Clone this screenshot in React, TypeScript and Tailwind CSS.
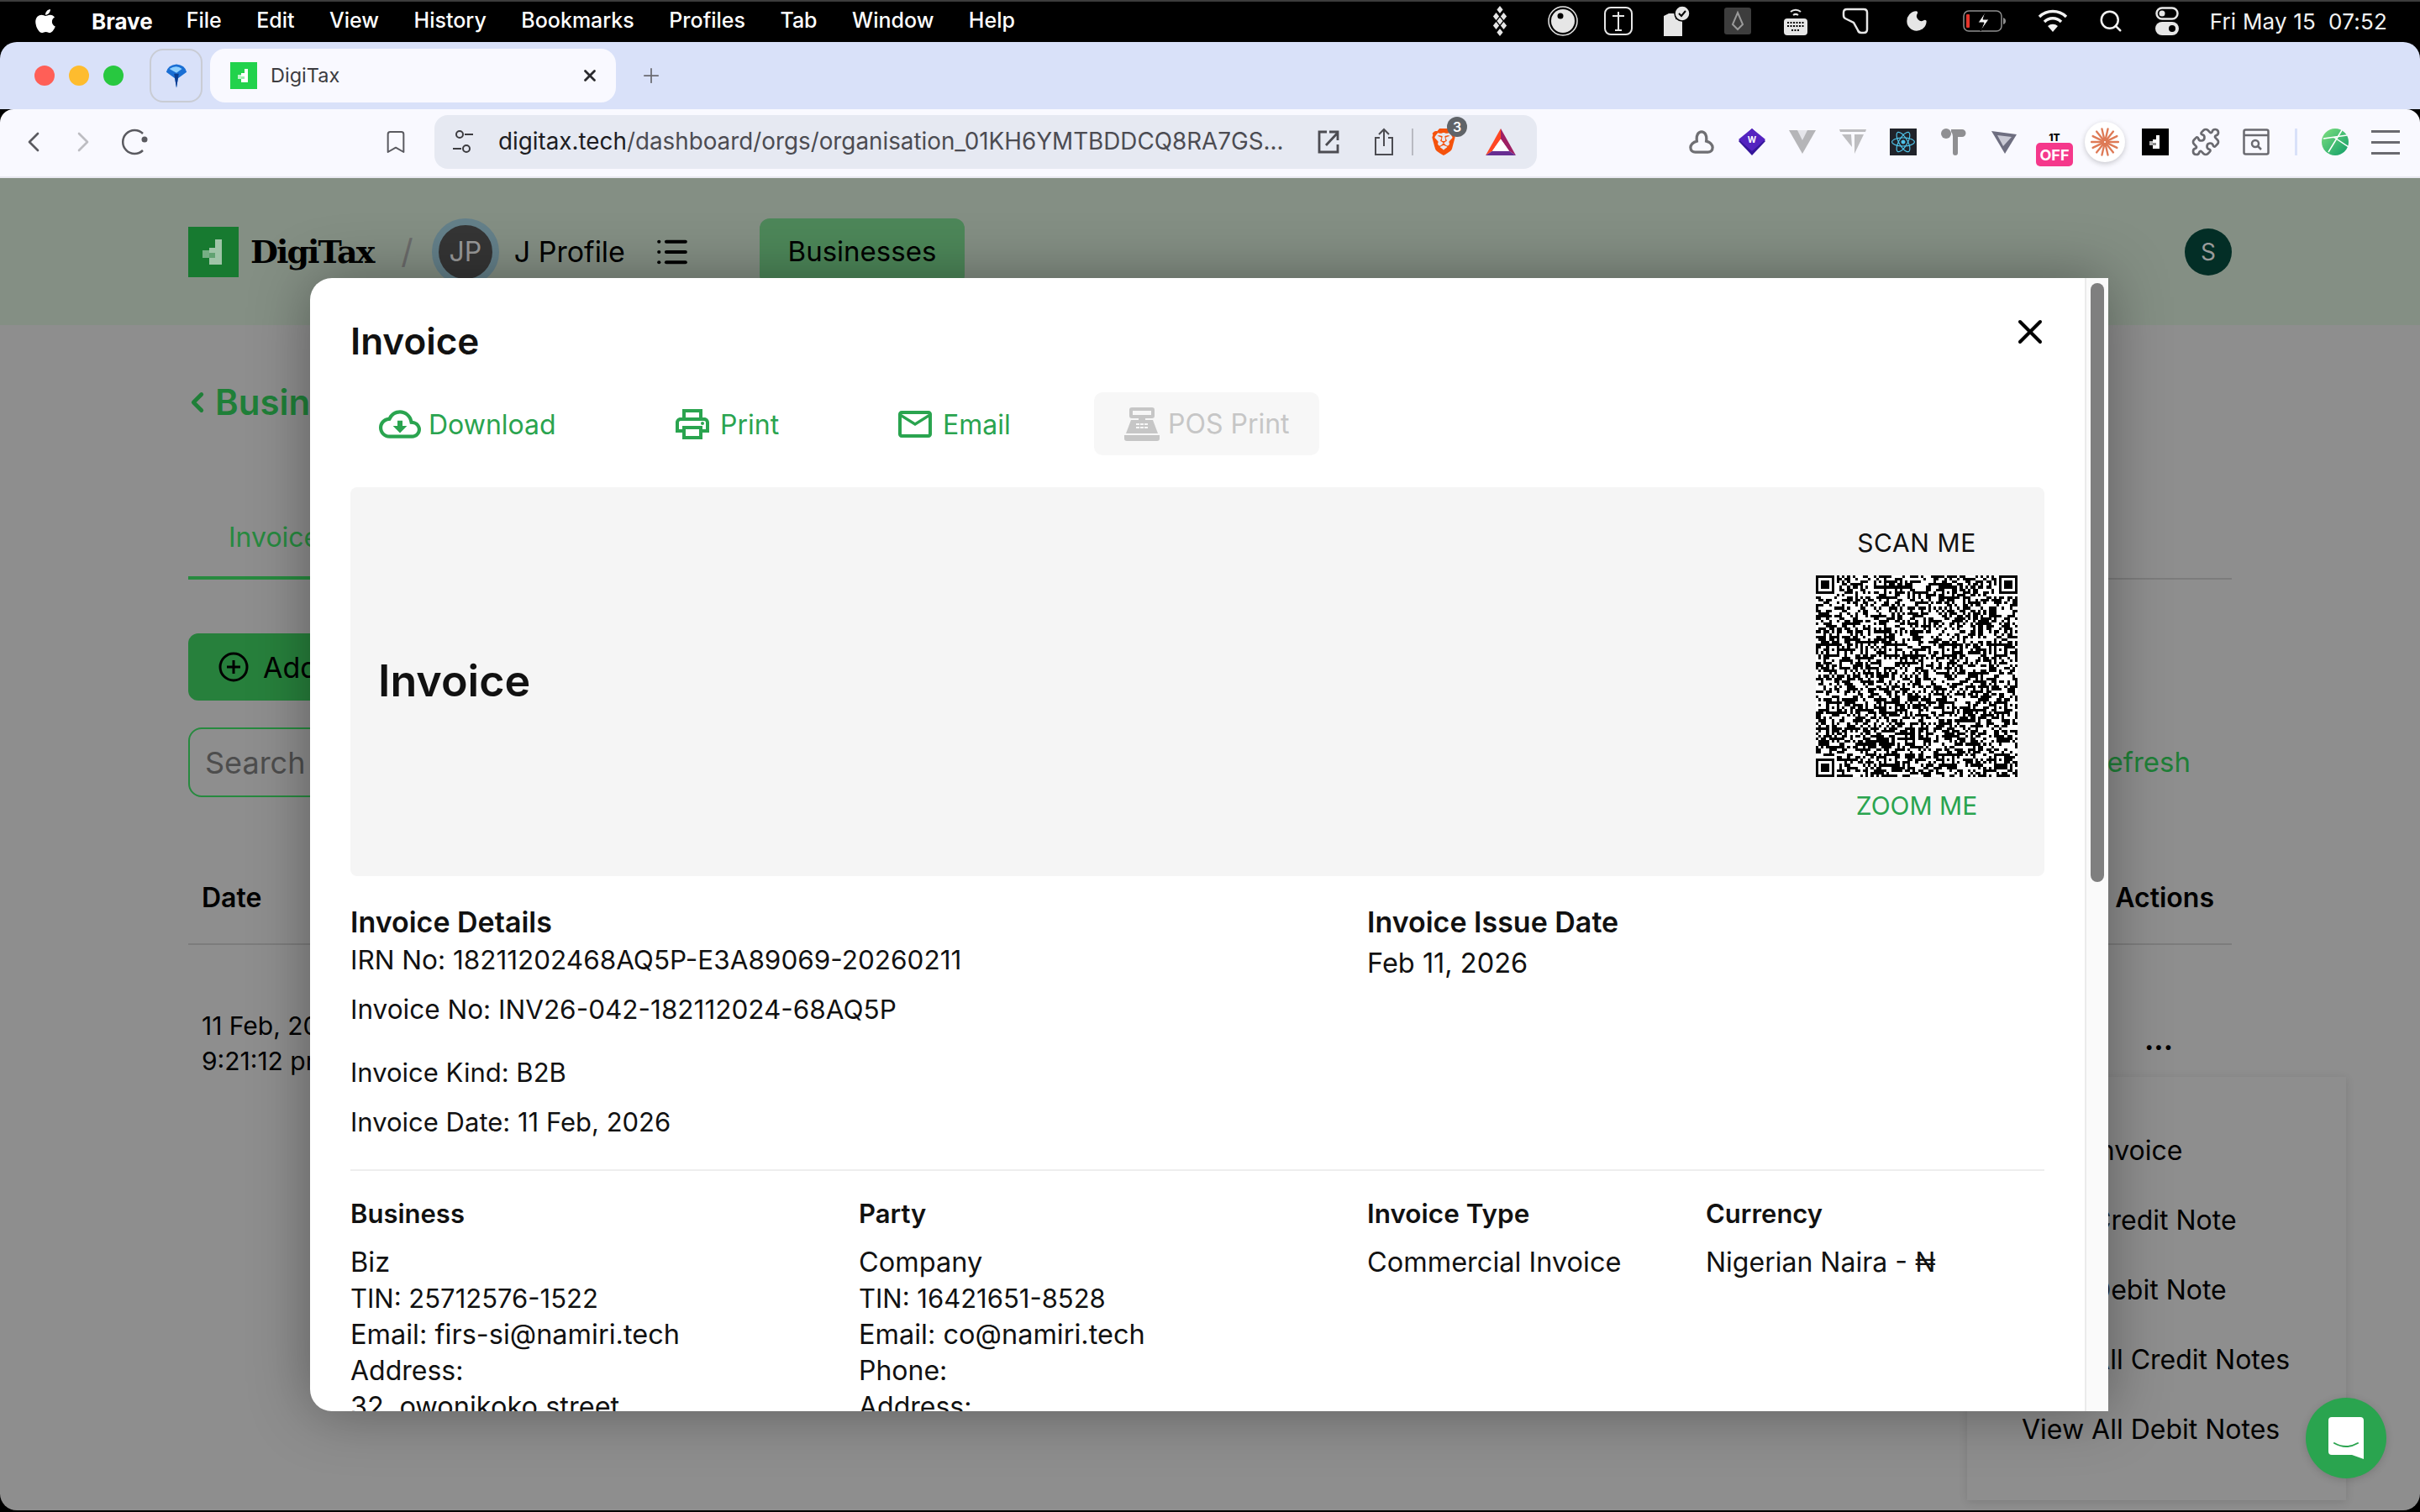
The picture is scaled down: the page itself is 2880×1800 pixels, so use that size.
import React from 'react';
import { FaApple, FaReact } from 'react-icons/fa';
import { SiBrave } from 'react-icons/si';
import { MdOutlineCloudDownload, MdOutlineLocalPrintshop, MdMailOutline } from 'react-icons/md';
import { ChevronLeft, ChevronRight, Bookmark, Puzzle, Plus, X, List, Search, Moon } from 'lucide-react';

const menuItems = ['File', 'Edit', 'View', 'History', 'Bookmarks', 'Profiles', 'Tab', 'Window', 'Help'];
const dropdownItems = ['View Invoice', 'View Credit Note', 'View Debit Note', 'View All Credit Notes', 'View All Debit Notes'];

// Pixel "d" mark of the DigiTax logo
const LogoMark = ({ bg, fg, className }: { bg: string; fg: string; className: string }) => (
  <svg viewBox="0 0 60 60" className={className} shapeRendering="crispEdges">
    <rect width="60" height="60" fill={bg} />
    <rect x="32" y="15" width="8" height="10" fill={fg} />
    <rect x="25" y="25" width="15" height="20" fill={fg} />
    <rect x="25" y="31" width="7" height="6" fill={bg} opacity="0.45" />
    <rect x="17" y="28" width="8" height="9" fill={fg} opacity="0.7" />
  </svg>
);

// Seeded fake QR code so every render gives the same picture
const buildQrPath = () => {
  const size = 77;
  let seed = 2468;
  const rand = () => {
    seed = (seed + 0x6d2b79f5) | 0;
    let t = Math.imul(seed ^ (seed >>> 15), 1 | seed);
    t = (t + Math.imul(t ^ (t >>> 7), 61 | t)) ^ t;
    return ((t ^ (t >>> 14)) >>> 0) / 4294967296;
  };
  const grid: boolean[][] = [];
  for (let y = 0; y < size; y++) {
    grid.push([]);
    for (let x = 0; x < size; x++) grid[y].push(rand() > 0.5);
  }
  const square = (ox: number, oy: number, n: number, ring: (d: number) => boolean, quiet = 0) => {
    for (let y = -quiet; y < n + quiet; y++) {
      for (let x = -quiet; x < n + quiet; x++) {
        const gx = ox + x;
        const gy = oy + y;
        if (gx < 0 || gy < 0 || gx >= size || gy >= size) continue;
        const inside = x >= 0 && y >= 0 && x < n && y < n;
        const d = Math.min(x, y, n - 1 - x, n - 1 - y);
        grid[gy][gx] = inside ? ring(d) : false;
      }
    }
  };
  const centers = [6, 28, 50, 70];
  centers.forEach(cy =>
    centers.forEach(cx => {
      if ((cx < 10 && cy < 10) || (cx > 66 && cy < 10) || (cx < 10 && cy > 66)) return;
      square(cx - 2, cy - 2, 5, d => d !== 1);
    })
  );
  const finder = (d: number) => d !== 1;
  square(0, 0, 7, finder, 1);
  square(size - 7, 0, 7, finder, 1);
  square(0, size - 7, 7, finder, 1);
  let path = '';
  grid.forEach((row, y) =>
    row.forEach((on, x) => {
      if (on) path += `M${x} ${y}h1v1h-1z`;
    })
  );
  return path;
};
const qrPath = buildQrPath();

const MenuBarIcons = () => (
  <div className="ml-auto flex items-center pr-[39px]">
    <svg viewBox="0 0 20 40" className="h-[36px] w-[20px]" fill="#e6e6e6">
      <path d="M10 0l4 5-4 5-4-5zM5 9l4 5-4 5-4-5zM15 9l4 5-4 5-4-5zM10 15l4 5-4 5-4-5zM5 21l4 5-4 5-4-5zM15 21l4 5-4 5-4-5zM10 30l4 5-4 5-4-5z" />
    </svg>
    <svg viewBox="0 0 36 36" className="ml-[47px] h-[36px] w-[36px]">
      <circle cx="18" cy="18" r="17" fill="none" stroke="#e6e6e6" strokeWidth="1.5" />
      <circle cx="18" cy="18" r="14" fill="#e6e6e6" />
      <circle cx="15" cy="12" r="3.5" fill="#000" />
    </svg>
    <svg viewBox="0 0 36 36" className="ml-[30px] h-[36px] w-[36px]" fill="none" stroke="#e6e6e6" strokeWidth="2">
      <rect x="2" y="2" width="32" height="32" rx="7" />
      <path d="M11 12h14M18 7v22M14 29h8" />
    </svg>
    <svg viewBox="0 0 34 36" className="ml-[34px] h-[38px] w-[34px]">
      <path d="M2 12l6-3h8v7h8v20H2z" fill="#e6e6e6" />
      <circle cx="24" cy="9" r="9" fill="#e6e6e6" stroke="#000" strokeWidth="1.5" />
      <path d="M20 9l3 3 5-6" fill="none" stroke="#000" strokeWidth="2" />
    </svg>
    <svg viewBox="0 0 32 32" className="ml-[40px] h-[32px] w-[32px]">
      <rect width="32" height="32" rx="3" fill="#3d3d3d" />
      <path d="M16 6l6 14-6 6-6-6z" fill="none" stroke="#9a9a9a" strokeWidth="2" />
    </svg>
    <svg viewBox="0 0 30 36" className="ml-[38px] h-[36px] w-[30px]">
      <path d="M9 7a9 9 0 0 1 12 0M12 11a5 5 0 0 1 6 0" fill="none" stroke="#e6e6e6" strokeWidth="2" />
      <rect x="1" y="15" width="28" height="20" rx="4" fill="#e6e6e6" />
      <path d="M5 20h20M5 24h20M10 29h10" stroke="#000" strokeWidth="2" strokeDasharray="2 1.5" />
    </svg>
    <svg viewBox="0 0 32 32" className="ml-[40px] h-[32px] w-[32px]">
      <path d="M2 6q0-4 4-4h20q4 0 4 4v20q0 4-4 4h-3q-3 0-4-3l-5-9L4 13q-2-1-2-4z" fill="none" stroke="#e6e6e6" strokeWidth="2.5" />
    </svg>
    <Moon className="ml-[43px] h-[36px] w-[28px]" fill="#e6e6e6" stroke="#e6e6e6" />
    <svg viewBox="0 0 52 26" className="ml-[41px] h-[26px] w-[52px]">
      <rect x="1" y="1" width="45" height="24" rx="6" fill="none" stroke="#8e8e8e" strokeWidth="1.5" />
      <rect x="4" y="5" width="4" height="16" rx="1" fill="#e5342b" />
      <path d="M48 9q3 1 3 4t-3 4z" fill="#8e8e8e" />
      <path d="M27 2l-9 13h7l-4 10 10-14h-7z" fill="#f2f2f2" stroke="#000" strokeWidth="1" />
    </svg>
    <svg viewBox="0 0 36 30" className="ml-[37px] h-[30px] w-[36px]" fill="none" stroke="#f2f2f2" strokeWidth="3.5">
      <path d="M2 10a23 23 0 0 1 32 0M8 16a14 14 0 0 1 20 0" />
      <path d="M18 28l-6-7a9 9 0 0 1 12 0z" fill="#f2f2f2" stroke="none" />
    </svg>
    <Search className="ml-[36px] h-[32px] w-[30px]" stroke="#f2f2f2" strokeWidth={2} />
    <svg viewBox="0 0 28 34" className="ml-[38px] h-[34px] w-[28px]">
      <rect x="1.5" y="1.5" width="25" height="13" rx="6.5" fill="none" stroke="#e6e6e6" strokeWidth="2.5" />
      <circle cx="8" cy="8" r="3.5" fill="#e6e6e6" />
      <rect x="0" y="18" width="28" height="16" rx="8" fill="#e6e6e6" />
      <circle cx="20" cy="26" r="4" fill="#000" />
    </svg>
    <span className="ml-[37px] text-[26px] tracking-[0.2px] text-[#f2f2f2]">Fri May 15&nbsp; 07:52</span>
  </div>
);

const ExtensionCell = ({ children }: { children: React.ReactNode }) => (
  <div className="flex h-[60px] w-[60px] items-center justify-center">{children}</div>
);

const ExtensionIcons = () => (
  <div className="ml-auto flex items-center pr-[11px]">
    <ExtensionCell>
      <svg viewBox="0 0 32 32" className="h-[30px] w-[32px]" fill="none" stroke="#6f6f73" strokeWidth="3.5">
        <path d="M10 15c-1-8 2-12 6-12s7 4 6 12c5 1 8 5 8 8 0 4-3 6-6 6H8c-3 0-6-2-6-6 0-3 3-7 8-8z" />
      </svg>
    </ExtensionCell>
    <ExtensionCell>
      <div className="relative flex h-[32px] w-[32px] items-center justify-center">
        <svg viewBox="0 0 32 32" className="absolute inset-0 h-full w-full">
          <path d="M16 0l16 15-16 17L0 15z" fill="#35169a" />
          <path d="M16 0l16 13-16 14L0 13z" fill="#5423c0" />
        </svg>
        <span className="relative -mt-[5px] text-[10px] font-bold text-white">W</span>
      </div>
    </ExtensionCell>
    <ExtensionCell>
      <svg viewBox="0 0 32 28" className="h-[28px] w-[32px]">
        <path d="M0 0h32L16 28z" fill="#b5b5b8" />
        <path d="M10 0h12l-6 12z" fill="#f9f9ff" opacity="0.7" />
      </svg>
    </ExtensionCell>
    <ExtensionCell>
      <svg viewBox="0 0 32 30" className="h-[30px] w-[32px]" fill="#bdbdc0">
        <path d="M0 0h32l-1 3H1zM3 6h11l1 15zM18 6h11L18 29z" />
      </svg>
    </ExtensionCell>
    <ExtensionCell>
      <div className="flex h-[32px] w-[32px] items-center justify-center bg-[#20232a]">
        <FaReact className="h-[28px] w-[28px] text-[#4fc3e8]" />
      </div>
    </ExtensionCell>
    <ExtensionCell>
      <svg viewBox="0 0 32 32" className="h-[32px] w-[32px]" fill="#8f8f92">
        <circle cx="7" cy="6" r="6" />
        <path d="M13 1h13a4.5 4.5 0 0 1 0 9h-5v19q0 3-3 3t-3-3V9q0-3-2-5z" />
      </svg>
    </ExtensionCell>
    <ExtensionCell>
      <svg viewBox="0 0 30 28" className="h-[28px] w-[30px]">
        <path d="M0 1l30 4-14 23z" fill="#6e6e80" />
        <path d="M7 6l17 2-10 11z" fill="#c9c9d4" />
      </svg>
    </ExtensionCell>
    <ExtensionCell>
      <div className="mt-[18px] flex h-[40px] w-[44px] flex-col items-center">
        <span className="h-[11px] text-[12px] leading-[11px] font-extrabold text-black">1T</span>
        <span className="mt-[1px] flex h-[28px] w-[44px] items-center justify-center rounded-[5px] bg-[#f5388b] text-[18px] font-bold text-white">OFF</span>
      </div>
    </ExtensionCell>
    <ExtensionCell>
      <div className="flex h-[48px] w-[48px] items-center justify-center rounded-full bg-white shadow-[0_2px_6px_rgba(0,0,0,0.2)]">
        <svg viewBox="-16 -16 32 32" className="h-[34px] w-[34px]" stroke="#de7a56" strokeWidth="2.2" strokeLinecap="round">
          {[...Array(14)].map((_, i) => {
            const a = (i / 14) * Math.PI * 2;
            return <line key={i} x1={Math.cos(a) * 2} y1={Math.sin(a) * 2} x2={Math.cos(a) * 15} y2={Math.sin(a) * 15} />;
          })}
        </svg>
      </div>
    </ExtensionCell>
    <ExtensionCell>
      <LogoMark bg="#000" fg="#fff" className="h-[32px] w-[32px]" />
    </ExtensionCell>
    <ExtensionCell>
      <Puzzle className="h-[36px] w-[36px]" stroke="#6a6a70" strokeWidth={1.8} />
    </ExtensionCell>
    <ExtensionCell>
      <svg viewBox="0 0 32 32" className="h-[32px] w-[34px]" fill="none" stroke="#6a6a70" strokeWidth="2.5">
        <rect x="1.5" y="1.5" width="29" height="29" rx="2" />
        <path d="M1.5 8h29" />
        <circle cx="15" cy="18" r="4" />
        <path d="M18 21l4 4" />
      </svg>
    </ExtensionCell>
    <div className="flex h-[32px] w-[34px] items-center justify-center">
      <div className="h-full w-[3px] bg-[#d9e1f9]" />
    </div>
    <ExtensionCell>
      <svg viewBox="0 0 32 32" className="h-[32px] w-[32px]">
        <defs>
          <linearGradient id="ball" x1="0" y1="0" x2="1" y2="1">
            <stop offset="0" stopColor="#7fe07f" />
            <stop offset="1" stopColor="#0f9d68" />
          </linearGradient>
        </defs>
        <circle cx="16" cy="16" r="16" fill="url(#ball)" />
        <path d="M2 12L30 8M8 28L24 2M14 10L32 22" stroke="#fff" strokeWidth="1.5" fill="none" />
      </svg>
    </ExtensionCell>
    <ExtensionCell>
      <div className="flex w-[34px] flex-col gap-[10px]">
        <div className="h-[3px] bg-[#6a6a70]" />
        <div className="h-[3px] bg-[#6a6a70]" />
        <div className="h-[3px] bg-[#6a6a70]" />
      </div>
    </ExtensionCell>
  </div>
);

const BrowserChrome = () => (
  <div className="shrink-0">
    {/* macOS menu bar */}
    <div className="flex h-[50px] items-center border-t-2 border-[#3c3c3c] bg-black pb-[2px] pl-[41px] text-[25px] text-white">
      <FaApple className="h-[32px] w-[26px]" />
      <span className="ml-[42px] text-[26px] font-bold">Brave</span>
      <div className="ml-[40px] flex gap-[41.5px] font-medium">
        {menuItems.map(item => (
          <span key={item}>{item}</span>
        ))}
      </div>
      <MenuBarIcons />
    </div>

    {/* Tab strip */}
    <div className="flex h-[80px] items-center rounded-t-[20px] bg-[#d9e1f9] pl-[41px]">
      <div className="flex gap-[17px]">
        <div className="h-[24px] w-[24px] rounded-full bg-[#ff5f57]" />
        <div className="h-[24px] w-[24px] rounded-full bg-[#febc2e]" />
        <div className="h-[24px] w-[24px] rounded-full bg-[#28c840]" />
      </div>
      <div className="ml-[31px] flex h-[64px] w-[63px] items-center justify-center rounded-[16px] border-2 border-[#c9ccd4]">
        <svg viewBox="0 0 30 30" className="h-[29px] w-[28px]">
          <path d="M15 30L13 18 2 10Q4 1 15 0q11 1 13 10L17 18z" fill="#1a6fd4" />
          <path d="M15 30L12 12h6z" fill="#0a3d91" />
          <path d="M6 6q9-6 16 0l-7 5z" fill="#8fd0ff" />
        </svg>
      </div>
      <div className="ml-[9px] flex h-[64px] w-[483px] items-center rounded-[18px] bg-[#f9f9ff] pl-[24px]">
        <LogoMark bg="#22d24c" fg="#fff" className="h-[32px] w-[32px]" />
        <span className="ml-[16px] text-[23.5px] text-[#3c3c40]">DigiTax</span>
        <X className="ml-auto mr-[20px] h-[22px] w-[22px]" stroke="#2a2a2e" strokeWidth={3} />
      </div>
      <Plus className="ml-[28px] h-[28px] w-[28px]" stroke="#6a6a70" strokeWidth={1.5} />
    </div>

    {/* Toolbar */}
    <div className="flex h-[80px] items-center rounded-t-[16px] bg-[#f9f9ff] pb-[2px]">
      <ChevronLeft className="ml-[20px] h-[44px] w-[40px]" stroke="#5a5a60" strokeWidth={1.6} />
      <ChevronRight className="ml-[19px] h-[44px] w-[40px]" stroke="#bdbdc2" strokeWidth={1.6} />
      <svg viewBox="0 0 34 34" className="ml-[25px] h-[34px] w-[34px]" fill="none" stroke="#5a5a60" strokeWidth="2.5">
        <path d="M26 27a14 14 0 1 1 0-20" />
        <circle cx="28" cy="14" r="3.5" fill="#5a5a60" stroke="none" />
      </svg>
      <Bookmark className="ml-[277px] h-[42px] w-[32px]" stroke="#5a5a60" strokeWidth={1.5} />
      <div className="ml-[30px] flex h-[64px] w-[1312px] items-center rounded-[16px] bg-[#e6e9f2] pl-[22px]">
        <svg viewBox="0 0 24 32" className="h-[34px] w-[24px]" fill="none" stroke="#3c3c40" strokeWidth="2">
          <circle cx="8" cy="7" r="4" />
          <path d="M14 7h10M0 24h10" />
          <circle cx="16" cy="24" r="4" />
        </svg>
        <div className="ml-[30px] w-[941px] whitespace-nowrap text-[27.8px] text-[#4c4c52]">
          <span className="text-[#1d1d22]">digitax.tech</span>/dashboard/orgs/organisation_01KH6YMTBDDCQ8RA7GS...
        </div>
        <svg viewBox="0 0 26 28" className="ml-[34px] h-[28px] w-[26px]" fill="none" stroke="#4c4c52" strokeWidth="2.8">
          <path d="M11 2H2v24h22v-9M10 18L24 3M14 2h10v10" />
        </svg>
        <svg viewBox="0 0 24 34" className="ml-[41px] h-[34px] w-[24px]" fill="none" stroke="#4c4c52" strokeWidth="2">
          <path d="M7 12H2v20h20V12h-5M12 22V2M6 8l6-6 6 6" />
        </svg>
        <div className="ml-[21px] h-[32px] w-[2px] bg-[#b8bac2]" />
        <div className="relative ml-[20px] h-[36px] w-[32px]">
          <SiBrave className="h-[36px] w-[32px] text-[#f5520c]" />
          <span className="absolute -right-[12px] -top-[12px] flex h-[24px] w-[24px] items-center justify-center rounded-full bg-[#5f6368] text-[16px] font-semibold text-white">3</span>
        </div>
        <svg viewBox="0 0 36 36" preserveAspectRatio="none" className="ml-[34px] h-[32px] w-[36px]">
          <path d="M18 0L0 36l8-6L18 14z" fill="#ff4724" />
          <path d="M18 0l18 36-8-6L18 14z" fill="#9e1f63" />
          <path d="M0 36h36l-8-6H8z" fill="#662d91" />
          <path d="M18 14l10 16H8z" fill="#fff" />
        </svg>
      </div>
      <ExtensionIcons />
    </div>
  </div>
);

// The dashboard page that sits dimmed behind the modal
const BackgroundPage = () => (
  <div className="flex h-full flex-col bg-[#8e8e8e] text-black">
    <header className="flex h-[175px] shrink-0 items-center bg-[#848f84] px-[224px]">
      <LogoMark bg="#177a30" fg="#9fc4a8" className="h-[60px] w-[60px]" />
      <span className="ml-[14px] font-['DejaVu_Serif',serif] text-[38px] font-bold tracking-[-2px]">DigiTax</span>
      <span className="ml-[33px] text-[40px] text-[#6b6b6b]">/</span>
      <div className="ml-[22px] flex h-[80px] w-[80px] items-center justify-center rounded-full border-[8px] border-[#64808a] bg-[#353535] text-[32px] text-[#9a9a9a]">JP</div>
      <span className="ml-[18px] text-[34px]">J Profile</span>
      <List className="ml-[35px] h-[42px] w-[42px]" strokeWidth={2.4} />
      <div className="ml-[83px] flex h-[80px] w-[244px] items-center justify-center rounded-[12px] bg-[#4d8759] text-[33px]">Businesses</div>
      <div className="ml-auto flex h-[56px] w-[56px] items-center justify-center rounded-full bg-[#032e26] text-[28px] text-[#9a9a9a]">S</div>
    </header>

    <main className="flex flex-col px-[224px]">
      <div className="mt-[65px] flex items-center text-[#1f7f38]">
        <ChevronLeft className="-ml-[8px] mr-[2px] h-[44px] w-[38px]" strokeWidth={3} />
        <span className="text-[42px] leading-[54px] font-semibold">Business</span>
      </div>
      <div className="mt-[114px] flex border-b-2 border-[#7c7c7c]">
        <div className="-mb-[2px] w-[190px] border-b-[4px] border-[#278a3f] pb-[26px] pl-[48px] text-[32px] leading-[40px] text-[#278a3f]">Invoices</div>
      </div>
      <div className="mt-[64px] flex h-[80px] w-[300px] items-center rounded-[12px] bg-[#27803c] pl-[36px] text-[34px]">
        <svg viewBox="0 0 36 36" className="h-[36px] w-[36px]" fill="none" stroke="#000" strokeWidth="3">
          <circle cx="18" cy="18" r="16" />
          <path d="M18 10v16M10 18h16" />
        </svg>
        <span className="ml-[17px]">Add Invoice</span>
      </div>
      <div className="mt-[32px] flex items-center justify-between pr-[49px]">
        <div className="flex h-[83px] w-[400px] items-center rounded-[16px] border-2 border-[#278a3f] pl-[18px] text-[36px] text-[#4d4d4d]">Search by</div>
        <span className="text-[33px] text-[#1f7f38]">Refresh</span>
      </div>
      <div className="mt-[100px] flex items-center justify-between border-b-2 border-[#7c7c7c] pb-[34px] pl-[16px] pr-[21px] text-[32px] leading-[40px] font-semibold">
        <span>Date</span>
        <span>Actions</span>
      </div>
      <div className="mt-[75px] flex justify-between pl-[16px] pr-[70px]">
        <div className="text-[30px] leading-[42px]">
          <div>11 Feb, 2026</div>
          <div>9:21:12 pm</div>
        </div>
        <span className="mt-[21px] text-[34px] leading-[34px] font-bold">...</span>
      </div>
    </main>
  </div>
);

type ActionProps = { width: string; gap: string; pad: string; icon: React.ReactNode; label: string };

const ActionButton = ({ width, gap, pad, icon, label }: ActionProps) => (
  <div className={`flex items-center text-[32px] text-[#2aa44f] ${width} ${gap} ${pad}`}>
    {icon}
    <span className="ml-[9px] mt-[2px]">{label}</span>
  </div>
);

const InvoiceModal = () => (
  <div className="absolute left-[369px] top-[119px] flex h-[1349px] w-[2140px] overflow-hidden rounded-l-[26px] bg-white text-[#111] shadow-[0_0_70px_rgba(0,0,0,0.35)]">
    <div className="min-w-0 flex-1 overflow-hidden pl-[48px] pr-[48px]">
      <div className="flex items-center justify-between pt-[51px]">
        <h1 className="text-[44px] leading-[48px] font-semibold">Invoice</h1>
        <X className="-mr-[7px] -mt-[22px] h-[48px] w-[48px]" stroke="#000" strokeWidth={2} />
      </div>

      <div className="mt-[37px] flex h-[75px] items-center">
        <ActionButton width="w-[282px]" gap="" pad="pl-[34px]" icon={<MdOutlineCloudDownload className="h-[50px] w-[50px]" />} label="Download" />
        <ActionButton width="w-[196px]" gap="ml-[69px]" pad="pl-[32px]" icon={<MdOutlineLocalPrintshop className="h-[48px] w-[48px]" />} label="Print" />
        <ActionButton width="w-[206px]" gap="ml-[69px]" pad="pl-[32px]" icon={<MdMailOutline className="h-[48px] w-[48px]" />} label="Email" />
        <div className="ml-[63px] flex h-[75px] w-[268px] items-center rounded-[10px] bg-[#f7f7f7] pl-[36px] text-[32px] text-[#c6c6c6]">
          <svg viewBox="0 0 42 40" className="h-[40px] w-[42px]">
            <path d="M9 0h24q3 0 3 3v7q0 3-3 3h-8v2h9l6 16H2l6-16h9v-2H9q-3 0-3-3V3q0-3 3-3z" fill="#c6c6c6" />
            <rect x="10" y="4" width="22" height="5" fill="#f7f7f7" />
            <path d="M14 19h4v2h-4zM19 19h4v2h-4zM24 19h4v2h-4zM14 23h4v2h-4zM19 23h4v2h-4zM24 23h4v2h-4z" fill="#f7f7f7" />
            <path d="M0 33h42v4q0 3-3 3H3q-3 0-3-3z" fill="#c6c6c6" />
          </svg>
          <span className="ml-[10px]">POS Print</span>
        </div>
      </div>

      <section className="mt-[38px] flex h-[463px] justify-between rounded-[8px] bg-[#f5f5f5] pb-[2px] pl-[33px] pr-[32px]">
        <h2 className="self-center text-[52px] font-semibold">Invoice</h2>
        <div className="mt-[46px] flex w-[240px] flex-col items-center text-[30px] leading-[40px]">
          <span className="tracking-[0.6px] text-[#111]">SCAN ME</span>
          <svg viewBox="0 0 77 77" className="mt-[19px] h-[240px] w-[240px] bg-white" shapeRendering="crispEdges">
            <path d={qrPath} fill="#000" />
          </svg>
          <span className="mt-[14px] text-[#2aa44f]">ZOOM ME</span>
        </div>
      </section>

      <section className="mt-[35px] grid grid-cols-[1210px_1fr] text-[31.5px] leading-[40px]">
        <div>
          <h3 className="text-[34px] font-semibold">Invoice Details</h3>
          <p className="mt-[5px]">IRN No: 18211202468AQ5P-E3A89069-20260211</p>
          <p className="mt-[19px]">Invoice No: INV26-042-182112024-68AQ5P</p>
          <p className="mt-[35px] text-[31px]">Invoice Kind: B2B</p>
          <p className="mt-[19px] text-[31px]">Invoice Date: 11 Feb, 2026</p>
        </div>
        <div>
          <h3 className="text-[34px] font-semibold">Invoice Issue Date</h3>
          <p className="mt-[9px] text-[32.5px]">Feb 11, 2026</p>
        </div>
      </section>

      <div className="mt-[36px] h-[2px] bg-[#eeeeee]" />

      <section className="mt-[31px] grid grid-cols-[605px_605px_403px_1fr] text-[32.5px] leading-[43px]">
        <div>
          <h3 className="mb-[16px] text-[31px] leading-[40px] font-semibold">Business</h3>
          <p>Biz</p>
          <p className="text-[31px]">TIN: 25712576-1522</p>
          <p>Email: firs-si@namiri.tech</p>
          <p className="text-[32px]">Address:</p>
          <p>32, owonikoko street</p>
        </div>
        <div>
          <h3 className="mb-[16px] text-[31px] leading-[40px] font-semibold">Party</h3>
          <p>Company</p>
          <p className="text-[31px]">TIN: 16421651-8528</p>
          <p>Email: co@namiri.tech</p>
          <p className="text-[32px]">Phone:</p>
          <p className="text-[32px]">Address:</p>
        </div>
        <div>
          <h3 className="mb-[16px] text-[31.5px] leading-[40px] font-semibold">Invoice Type</h3>
          <p>Commercial Invoice</p>
        </div>
        <div>
          <h3 className="mb-[16px] text-[31px] leading-[40px] font-semibold">Currency</h3>
          <p className="text-[32px]">Nigerian Naira - ₦</p>
        </div>
      </section>
    </div>

    {/* Modal scrollbar */}
    <div className="w-[28px] shrink-0 border-l-2 border-[#ebebeb] bg-[#fafafa] pl-[5px] pt-[6px]">
      <div className="h-[713px] w-[16px] rounded-full bg-[#7f7f7f]" />
    </div>
  </div>
);

export default function App() {
  return (
    <div className="flex h-[1800px] w-[2880px] flex-col overflow-hidden bg-black font-['Inter',sans-serif]">
      <BrowserChrome />
      <div className="relative mb-[2px] min-h-0 flex-1 overflow-hidden rounded-b-[20px] border-t-2 border-[#e8e8f0]">
        <BackgroundPage />

        {/* Row action menu, left open behind the modal */}
        <div className="absolute left-[2341px] top-[1070px] flex h-[504px] w-[451px] flex-col bg-[#8e8e8e] pl-[65px] pt-[46px] text-[32px] leading-[83px] text-black shadow-[0_2px_10px_rgba(0,0,0,0.12)]">
          {dropdownItems.map(item => (
            <span key={item}>{item}</span>
          ))}
        </div>

        <InvoiceModal />

        {/* Chat launcher */}
        <div className="absolute left-[2744px] top-[1452px] flex h-[96px] w-[96px] items-center justify-center rounded-full bg-[#2aa44f] shadow-[0_2px_10px_rgba(0,0,0,0.15)]">
          <svg viewBox="0 0 42 50" className="h-[50px] w-[42px]">
            <path d="M4 0h34q4 0 4 4v46l-14-5H4q-4 0-4-4V4q0-4 4-4z" fill="#fff" />
            <path d="M7 31q14 8 28 0" fill="none" stroke="#2aa44f" strokeWidth="2" strokeLinecap="round" />
          </svg>
        </div>
      </div>
    </div>
  );
}
